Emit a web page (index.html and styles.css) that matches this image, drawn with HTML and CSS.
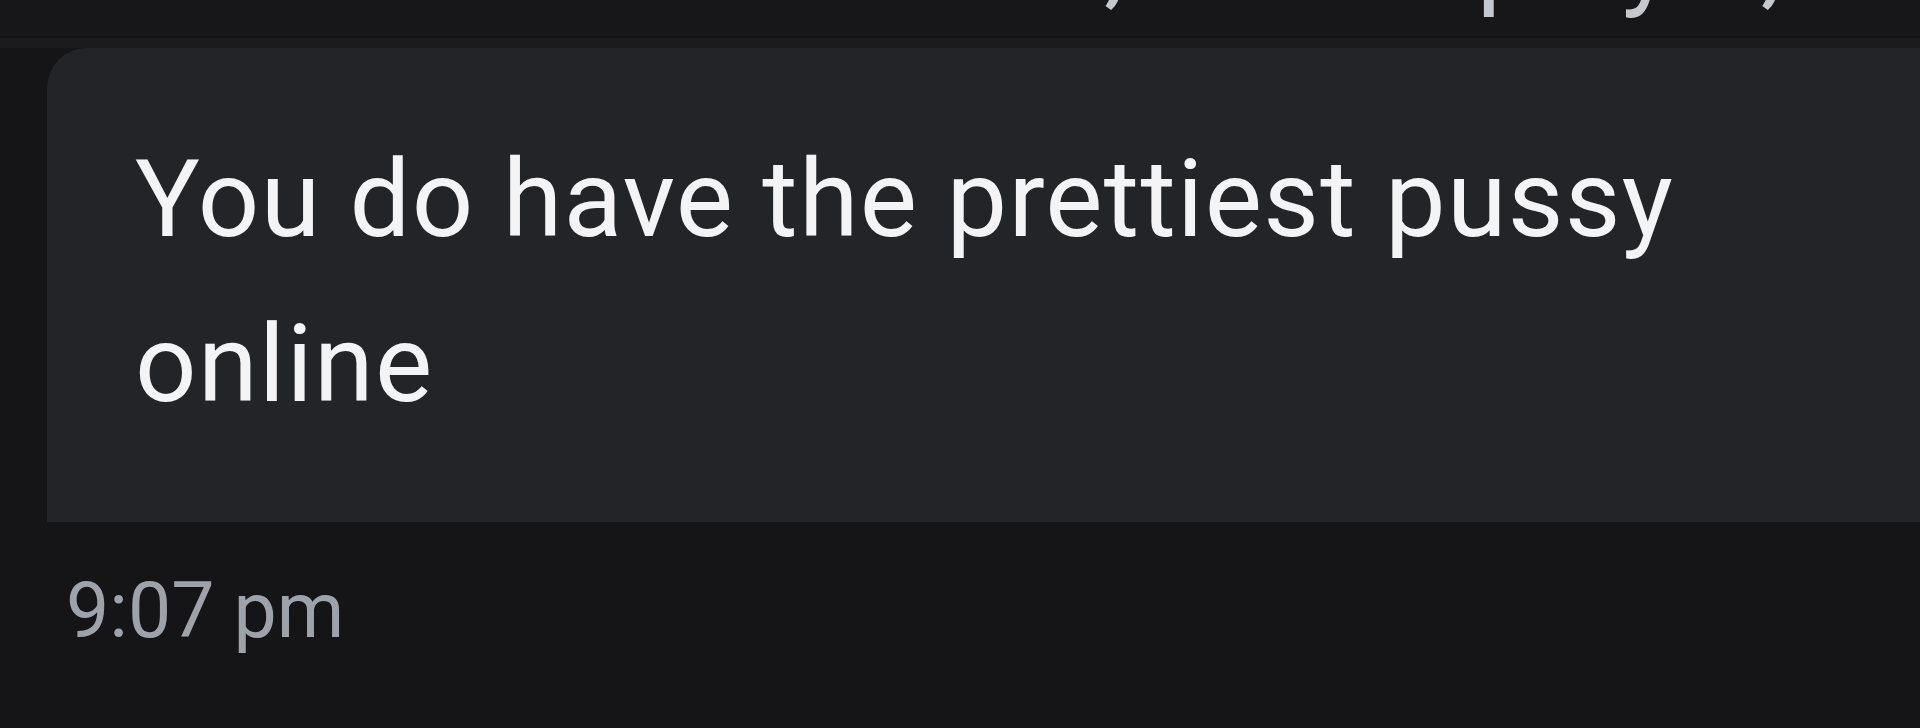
FILE: index.html
```html
<!DOCTYPE html>
<html lang="en">
<head>
    <meta charset="UTF-8">
    <meta name="viewport" content="width=device-width, initial-scale=1.0">
    <title>Message</title>
    <link rel="stylesheet" href="styles.css">
</head>
<body>
    <div class="chat">
        <!-- bottom of the previous message, cut off by the screenshot -->
        <div class="prev-message">
            <p class="prev-text">Wow that is the best, let me play it, ok</p>
        </div>
        <div class="prev-gap"></div>

        <div class="bubble">
            <p class="bubble-text">You do have the prettiest pussy online</p>
        </div>

        <div class="meta">
            <span class="time">9:07 pm</span>
        </div>
    </div>
</body>
</html>
```

FILE: styles.css
```css
* {
    margin: 0;
    padding: 0;
    box-sizing: border-box;
    font-family: Roboto, "Noto Sans", Arial, sans-serif;
}

body {
    background-color: #151517;
    height: 100vh;
    overflow: hidden;
}

.chat {
    display: flex;
    flex-direction: column;
}

/* Previous message: only the descenders are still visible */
.prev-message {
    height: 38px;
    overflow: hidden;
    background-color: #171719;
    border-bottom: 2px solid #121214;
}

.prev-text {
    padding-left: 128px;
    margin-top: -124px;
    font-size: 108px;
    line-height: 165px;
    color: #c4c8cf;
    white-space: nowrap;
}

.prev-gap {
    height: 10px;
    background-color: #1b1b1d;
}

/* Message bubble */
.bubble {
    margin-left: 47px;
    height: 474px;
    background-color: #232428;
    border-top-left-radius: 40px;
    padding: 69px 0 0 88px;
}

.bubble-text {
    max-width: 1640px;
    font-size: 108px;
    line-height: 165px;
    letter-spacing: 1.3px;
    color: #f4f4f6;
}

.meta {
    padding: 44px 0 0 66px;
}

.time {
    font-size: 77px;
    line-height: 90px;
    color: #9ea3ab;
}
```
